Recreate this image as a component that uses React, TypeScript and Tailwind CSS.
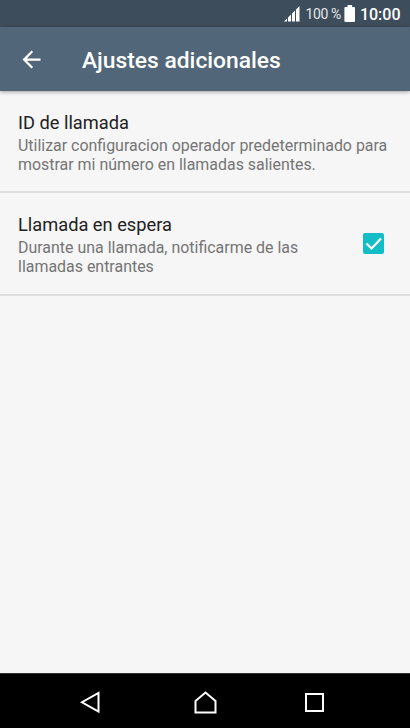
import type { ReactNode } from "react";

function StatusBar() {
  return (
    <div className="flex h-[27px] shrink-0 items-center justify-end bg-[#3e4d5b] pt-px pr-[9.5px] text-white">
      <svg width="16" height="16" viewBox="0 0 16 16" fill="currentColor" className="mr-[5.5px]">
        <path d="M0 15.500L3 12.500v3zM4 11.500l3-3v7H4zM8 7.500l3-3v11H8zM12 3.500L15.500 0v15.500H12z" />
      </svg>
      <span className="mr-[3px] text-[14px] leading-none tracking-[-0.4px] text-[#e2e6ea]">100 %</span>
      <svg width="12" height="18" viewBox="0 0 12 18" fill="currentColor" className="mr-[4px]">
        <path d="M3.5 0h4.6v2H10a1 1 0 0 1 1 1v13a1 1 0 0 1-1 1H1.400a1 1 0 0 1-1-1V3a1 1 0 0 1 1-1h2.100z" />
      </svg>
      <span className="pt-px text-[16px] font-medium leading-none">10:00</span>
    </div>
  );
}

function Header() {
  return (
    <header className="z-10 flex h-16 shrink-0 items-center bg-[#516678] pl-[18px] text-white shadow-[0_1px_4px_rgba(0,0,0,0.35)]">
      <svg width="27" height="27" viewBox="0 0 24 24" fill="currentColor">
        <path d="M20 11H7.830l5.590-5.590L12 4l-8 8 8 8 1.410-1.410L7.830 13H20v-2z" />
      </svg>
      <h1 className="ml-[37px] pt-[4px] text-[22.8px] font-medium leading-7">Ajustes adicionales</h1>
    </header>
  );
}

type SettingRowProps = {
  title: string;
  lines: string[];
  children?: ReactNode;
};

function SettingRow({ title, lines, children }: SettingRowProps) {
  return (
    <li className="flex items-center justify-between border-b-2 border-[#dedede] pl-[18px] pr-[23px]">
      <div className="whitespace-nowrap pt-[19px] pb-[17.4px]">
        <h2 className="mb-px text-[18.25px] leading-[25px] text-[#212121]">{title}</h2>
        {lines.map((line) => (
          <p key={line} className="text-[15.95px] leading-[19px] text-[#757575]">
            {line}
          </p>
        ))}
      </div>
      {children}
    </li>
  );
}

function Checkbox() {
  return (
    <svg width="27" height="27" viewBox="0 0 27 27" className="shrink-0" role="checkbox" aria-checked="true">
      <rect x="3" y="3" width="21" height="21" rx="2" fill="#12bdc8" />
      <path d="M6.500 13.500l5 5L21 8.500" fill="none" stroke="#fff" strokeWidth="2.200" />
    </svg>
  );
}

function NavigationBar() {
  return (
    <nav className="flex h-[55px] shrink-0 items-center justify-center gap-[84px] border-t border-[#333] bg-black pt-[2px] text-white">
      <svg width="25" height="25" viewBox="6 0 25 25" fill="none" stroke="currentColor" strokeWidth="2" className="overflow-visible">
        <path d="M20.500 3v18.500L4 12.250z" />
      </svg>
      <svg width="25" height="25" viewBox="0 0 25 25" fill="none" stroke="currentColor" strokeWidth="2">
        <path d="M2.500 11L12.500 2.500l10 8.500v11.500h-20z" />
      </svg>
      <svg width="25" height="25" viewBox="0 0 25 25" fill="none" stroke="currentColor" strokeWidth="2">
        <rect x="4" y="4" width="17" height="17" />
      </svg>
    </nav>
  );
}

export default function App() {
  return (
    <div className="flex h-screen flex-col overflow-hidden bg-[#f6f6f6] font-['Roboto',sans-serif]">
      <StatusBar />
      <Header />
      <ul className="flex-1">
        <SettingRow
          title="ID de llamada"
          lines={["Utilizar configuracion operador predeterminado para", "mostrar mi número en llamadas salientes."]}
        />
        <SettingRow title="Llamada en espera" lines={["Durante una llamada, notificarme de las", "llamadas entrantes"]}>
          <Checkbox />
        </SettingRow>
      </ul>
      <NavigationBar />
    </div>
  );
}
